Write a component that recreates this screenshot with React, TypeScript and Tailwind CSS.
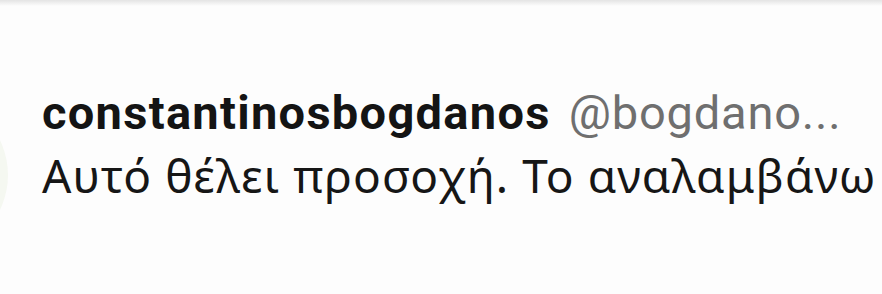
const App = () => {
  return (
    <div className="relative w-[882px] h-[294px] overflow-hidden bg-[#fdfdfd] font-['Roboto',sans-serif]">
      <div className="h-[6px] bg-gradient-to-b from-[#e4e4e4] to-[#fdfdfd]" />
      {/* avatar edge peeking in from the left */}
      <div className="absolute left-[-152px] top-[95px] w-[160px] h-[160px] rounded-full bg-[#f5f8f1]" />
      <div className="relative pl-[42px] pt-[75px] leading-[63px]">
        <div className="flex items-baseline whitespace-nowrap text-[47px]">
          <span className="font-bold text-[#141414] tracking-[1.3px]">constantinosbogdanos</span>
          <span className="ml-[18px] text-[#6f6f6f] tracking-[0.8px]">@bogdano...</span>
        </div>
        <div className="whitespace-nowrap text-[46px] tracking-[1.1px] text-[#161616] font-['Noto_Sans',sans-serif]">
          Αυτό θέλει προσοχή. Το αναλαμβάνω
        </div>
      </div>
    </div>
  );
};
export default App;
